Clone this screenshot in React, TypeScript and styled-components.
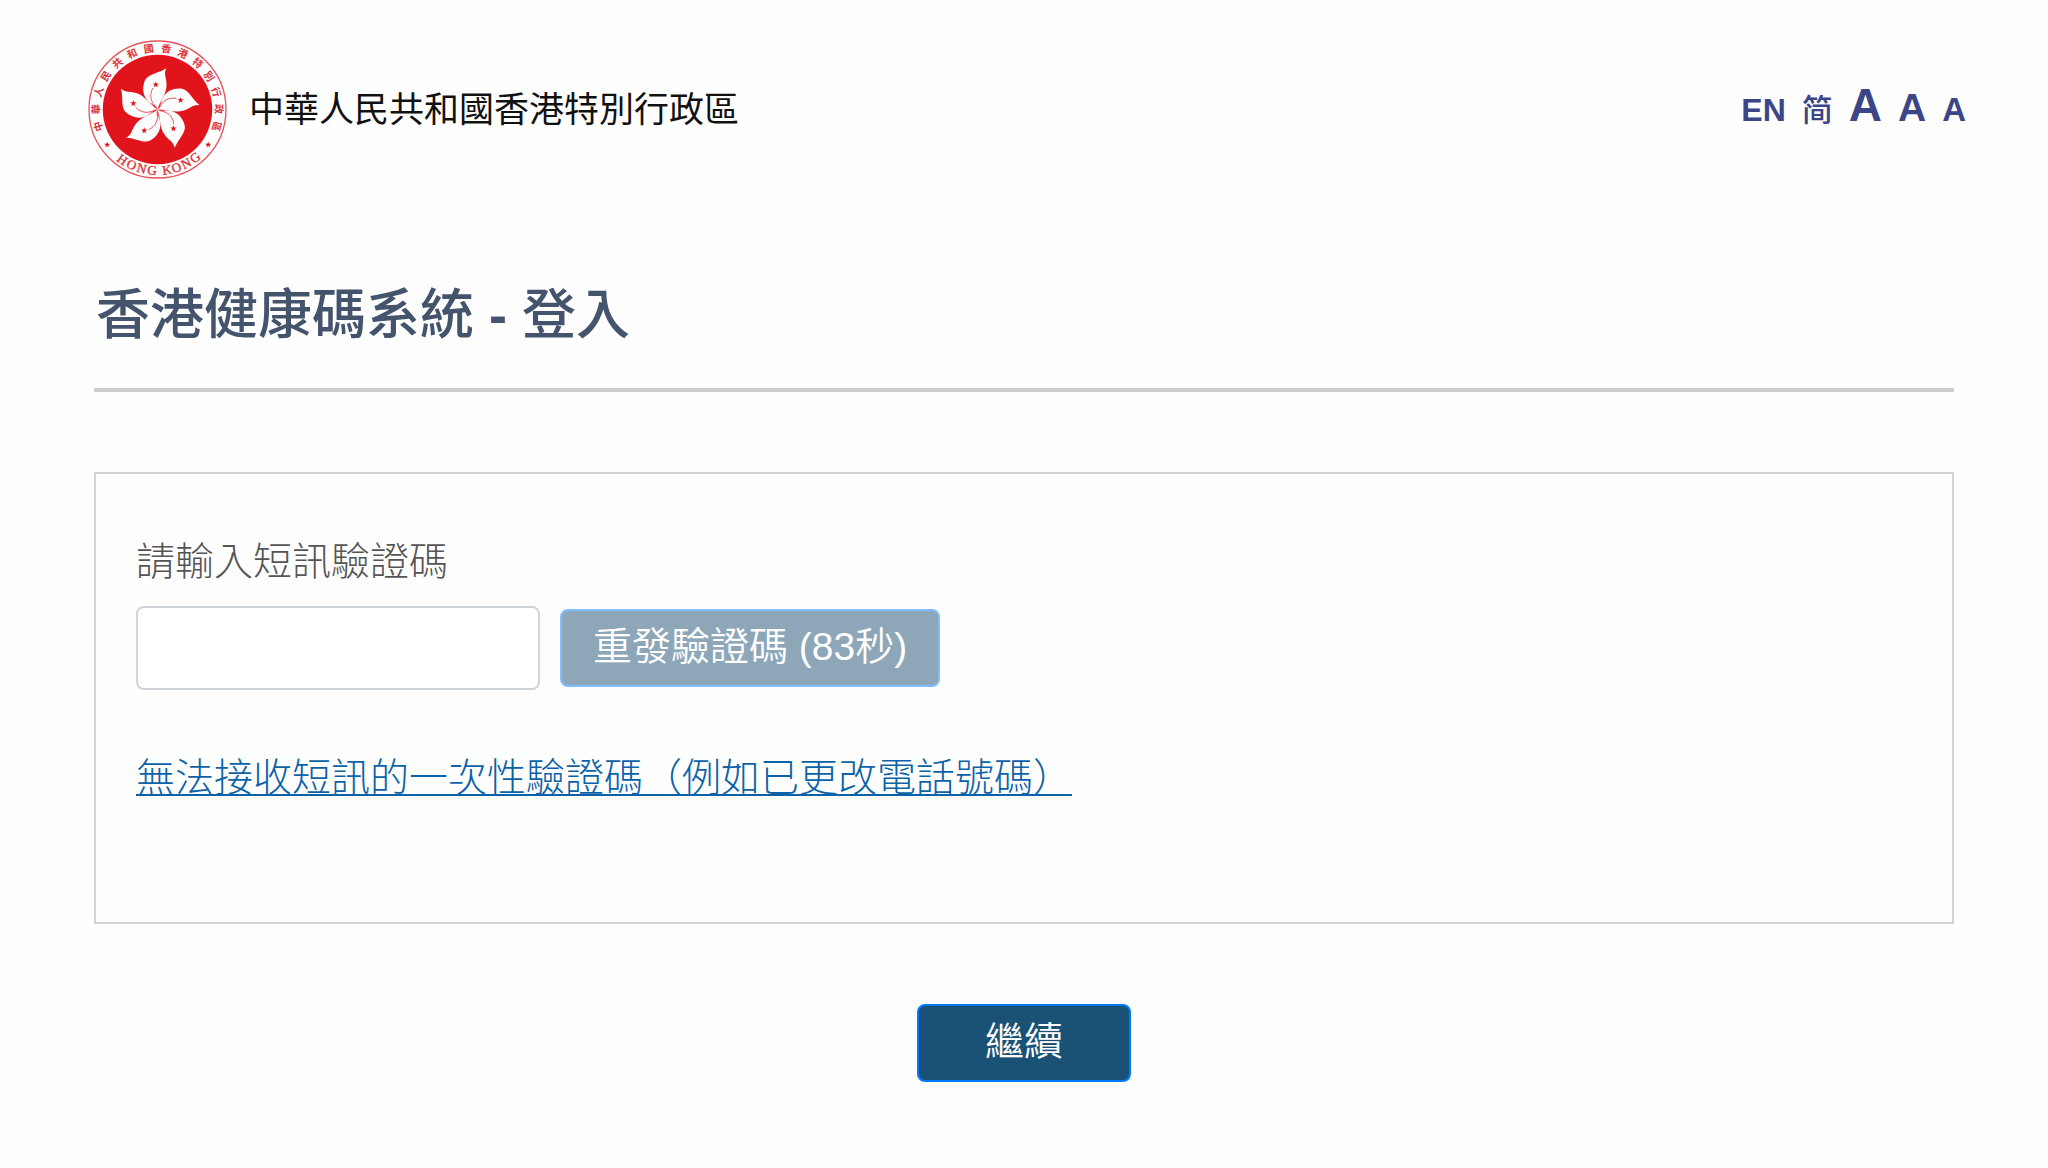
import React from "react";
import styled, { createGlobalStyle } from "styled-components";

const GlobalStyle = createGlobalStyle`
  * { box-sizing: border-box; }
  body {
    margin: 0;
    background: #fefefe;
    color: #555;
    font-family: "Liberation Sans", Arial, "Noto Sans CJK TC", sans-serif;
    font-size: 39px;
    font-weight: 300;
    line-height: 56px;
  }
`;

const Header = styled.header`
  display: flex;
  align-items: center;
  justify-content: space-between;
  padding: 40px 82px 0 88px;
`;

const Brand = styled.a`
  display: flex;
  align-items: center;
  gap: 22px;
  color: #111;
  font-size: 35px;
  font-weight: 400;
  line-height: 48px;
  text-decoration: none;
`;

const Emblem = styled.svg`
  width: 139px;
  height: 139px;
  flex: none;
`;

const Tools = styled.nav`
  display: flex;
  align-items: baseline;
  gap: 16px;
  padding-bottom: 4px;
`;

const toolText = `
  color: #3b4687;
  font-family: inherit;
  line-height: 48px;
`;

const LangLink = styled.a<{ $size: number; $weight: number }>`
  ${toolText}
  font-size: ${(p) => p.$size}px;
  font-weight: ${(p) => p.$weight};
  text-decoration: none;
`;

const SizeButton = styled.button<{ $size: number }>`
  ${toolText}
  padding: 0;
  border: 0;
  background: none;
  font-size: ${(p) => p.$size}px;
  font-weight: 700;
  cursor: pointer;
`;

const Main = styled.main`
  padding: 100px 94px 86px;
`;

const Title = styled.h1`
  margin: 0 0 80px;
  padding: 0 2px 37px;
  border-bottom: 4px solid #ccc;
  color: #44546c;
  font-size: 54px;
  font-weight: 500;
  line-height: 72px;
`;

const Dash = styled.span`
  font-weight: 700;
`;

const Panel = styled.section`
  padding: 60px 40px 116px;
  border: 2px solid #d3d3d3;
`;

const Label = styled.label`
  display: block;
  margin-bottom: 16px;
`;

const CodeRow = styled.div`
  display: flex;
  align-items: center;
  gap: 20px;
  margin-bottom: 60px;
`;

const CodeInput = styled.input`
  width: 404px;
  height: 84px;
  padding: 12px 24px;
  border: 2px solid #ced4da;
  border-radius: 8px;
  background: #fff;
  color: #495057;
  font: inherit;
`;

const Button = styled.button<{ $pad: number }>`
  height: 78px;
  padding: 0 ${(p) => p.$pad}px 2px;
  border: 2px solid #007bff;
  border-radius: 8px;
  background: #1a5276;
  color: #fff;
  font: inherit;
  font-weight: 350;
  cursor: pointer;
  &:disabled {
    border-color: #80bdff;
    background: #8da7b9;
    cursor: default;
  }
`;

const HelpLink = styled.a`
  color: #0b62a8;
  text-decoration: underline 2px;
  text-underline-offset: 3px;
  text-decoration-skip-ink: none;
`;

const Actions = styled.div`
  display: flex;
  justify-content: center;
  padding-top: 80px;
`;

const RING = "中華人民共和國香港特別行政區".split("");

const LATIN: [string, number][] = [
  ["H", 35],
  ["O", 25],
  ["N", 15],
  ["G", 5],
  ["K", -9],
  ["O", -18],
  ["N", -28],
  ["G", -38],
];

const STAR = "M0-10 2.300-3.200 9.500-3 3.800 1.200 6 8 0 4-6 8-3.800 1.200-9.500-3-2.300-3.200Z";

function Flower() {
  return (
    <>
      {[0, 72, 144, 216, 288].map((a) => (
        <g key={a} transform={`rotate(${a})`}>
          <path
            d="M0 0C-6-14-18-14-31-28C-45-45-46-69-36-89C-26-107 7-109 26-123C17-104 28-94 27-71C26-47 8-26 0 0Z"
            fill="#fff"
          />
          <path d="M-2-6C-21-22-25-42-14-64" fill="none" stroke="#e1141c" strokeWidth="2" />
          <path d={STAR} transform="translate(-5 -74)" fill="#e1141c" />
        </g>
      ))}
    </>
  );
}

function Seal() {
  return (
    <Emblem viewBox="-207 -207 414 414" aria-hidden="true">
      <circle r="204" fill="#fff" stroke="#e9525a" strokeWidth="4" />
      <circle r="163" fill="#e1141c" />
      <Flower />
      <g fill="#dc3038" fontFamily='"Noto Sans CJK TC", sans-serif' fontSize="30" fontWeight="700" textAnchor="middle">
        {RING.map((c, i) => (
          <text key={i} y="-172" transform={`rotate(${(i - 6.5) * 16.3})`}>
            {c}
          </text>
        ))}
      </g>
      <g
        fill="#dc3038"
        stroke="#dc3038"
        fontFamily='"Liberation Serif", serif'
        fontSize="39"
        textAnchor="middle"
      >
        {LATIN.map(([c, a], i) => (
          <text key={i} y="195" transform={`rotate(${a})`}>
            {c}
          </text>
        ))}
      </g>
      <path d={STAR} transform="translate(-150 105)" fill="#e1141c" />
      <path d={STAR} transform="translate(151 105)" fill="#e1141c" />
    </Emblem>
  );
}

export default function App() {
  return (
    <>
      <GlobalStyle />
      <Header>
        <Brand href="#">
          <Seal />
          <span>中華人民共和國香港特別行政區</span>
        </Brand>
        <Tools>
          <LangLink href="#" $size={32} $weight={700}>EN</LangLink>
          <LangLink href="#" $size={31} $weight={500} lang="zh-Hans">简</LangLink>
          <SizeButton type="button" $size={46}>A</SizeButton>
          <SizeButton type="button" $size={39}>A</SizeButton>
          <SizeButton type="button" $size={33}>A</SizeButton>
        </Tools>
      </Header>
      <Main>
        <Title>香港健康碼系統 <Dash>-</Dash> 登入</Title>
        <Panel>
          <Label htmlFor="code">請輸入短訊驗證碼</Label>
          <CodeRow>
            <CodeInput id="code" type="text" inputMode="numeric" autoComplete="one-time-code" />
            <Button type="button" disabled $pad={31}>重發驗證碼 (83秒)</Button>
          </CodeRow>
          <HelpLink href="#">無法接收短訊的一次性驗證碼（例如已更改電話號碼）</HelpLink>
        </Panel>
        <Actions>
          <Button type="submit" $pad={66}>繼續</Button>
        </Actions>
      </Main>
    </>
  );
}
